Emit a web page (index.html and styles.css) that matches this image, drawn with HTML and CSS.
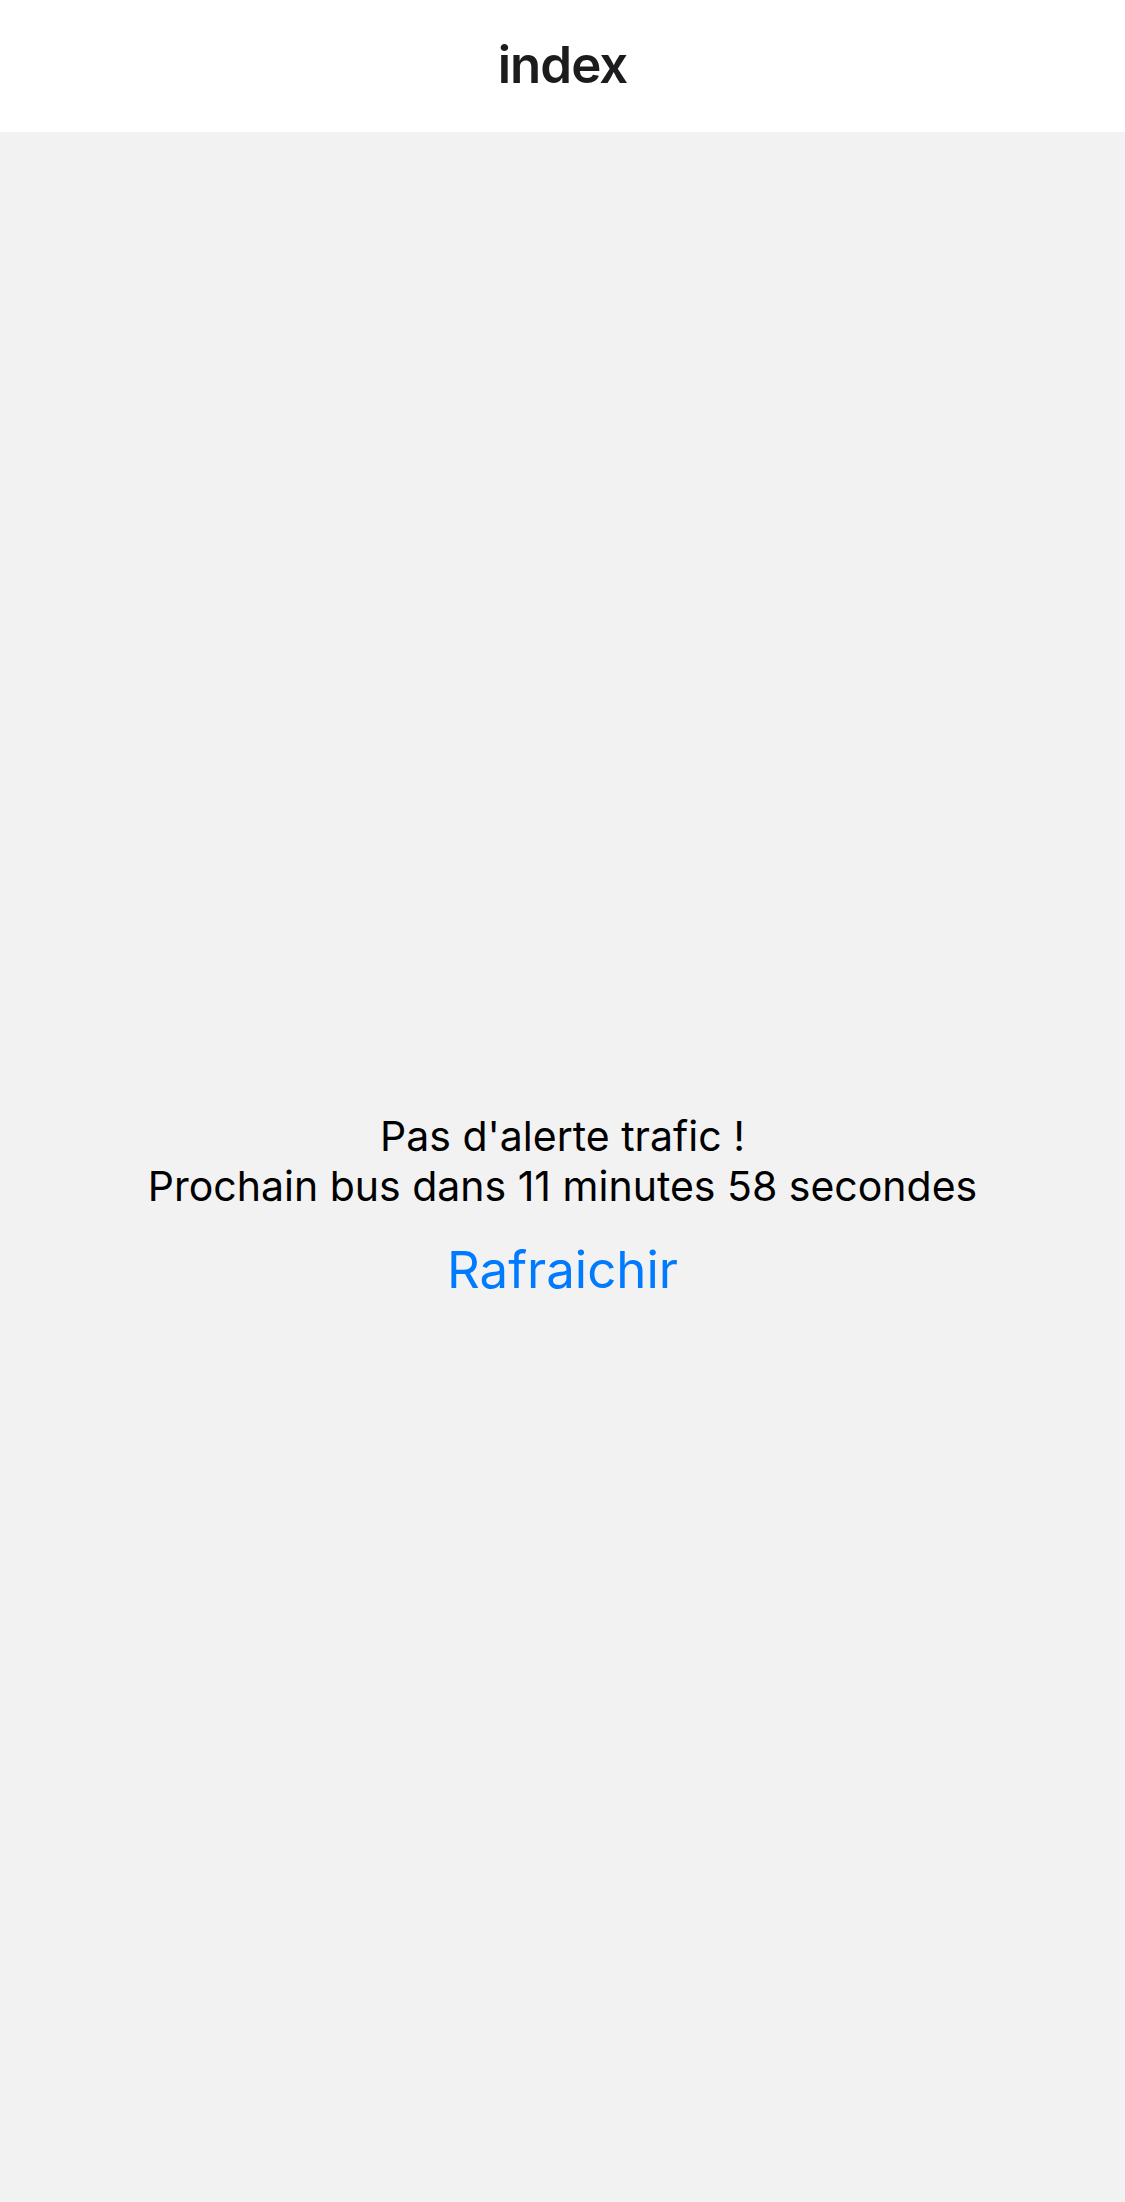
FILE: index.html
```html
<!DOCTYPE html>
<html lang="fr">
<head>
<meta charset="utf-8">
<title>index</title>
<link rel="stylesheet" href="styles.css">
</head>
<body>
<div class="app">
  <header class="navbar">
    <h1 class="nav-title">index</h1>
  </header>
  <main class="content">
    <div class="status">
      <p class="status-line">Pas d'alerte trafic !</p>
      <p class="status-line">Prochain bus dans 11 minutes 58 secondes</p>
    </div>
    <button class="refresh" type="button">Rafraichir</button>
  </main>
</div>
</body>
</html>
```

FILE: styles.css
```css
* { box-sizing: border-box; }
html, body {
  margin: 0;
  padding: 0;
  height: 100%;
}
body {
  font-family: Inter, "Noto Sans", "Liberation Sans", sans-serif;
  background: #f2f2f2;
}
.app {
  display: flex;
  flex-direction: column;
  height: 2202px;
}
.navbar {
  height: 132px;
  background: #ffffff;
  display: flex;
  align-items: center;
  justify-content: center;
  flex-shrink: 0;
}
.nav-title {
  margin: 0;
  font-size: 51px;
  line-height: 61px;
  font-weight: 600;
  color: #1c1c1e;
  letter-spacing: -1px;
  padding-bottom: 4px;
}
.content {
  flex: 1;
  display: flex;
  flex-direction: column;
  align-items: center;
  justify-content: center;
  padding-top: 76px;
}
.status {
  text-align: center;
}
.status-line {
  margin: 0;
  font-size: 41px;
  line-height: 50px;
  color: #000000;
}
.refresh {
  margin-top: 28px;
  background: none;
  border: none;
  padding: 0;
  font-family: inherit;
  font-size: 51px;
  line-height: 61px;
  color: #007aff;
  cursor: pointer;
}
```
